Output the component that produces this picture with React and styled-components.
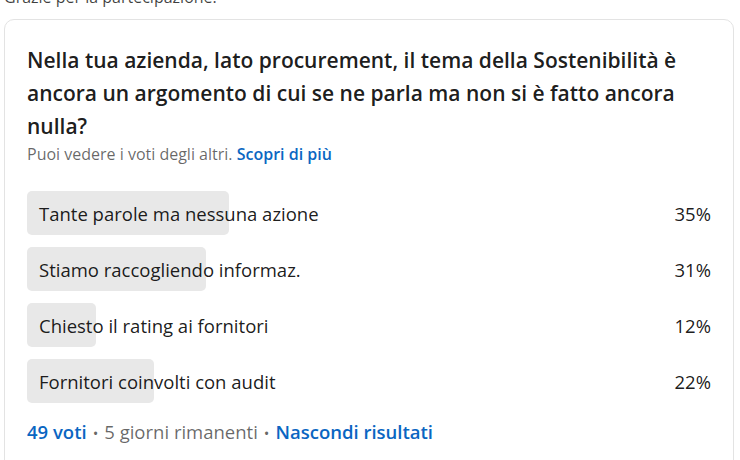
import React from "react";
import styled, { createGlobalStyle } from "styled-components";

const GlobalStyle = createGlobalStyle`
  html, body {
    margin: 0;
    padding: 0;
    background: #ffffff;
    overflow: hidden;
  }

  body {
    font-family: "Open Sans", "Noto Sans", "Liberation Sans", sans-serif;
    color: rgba(0, 0, 0, 0.9);
  }
`;

const options = [
  { label: "Tante parole ma nessuna azione", pct: 35 },
  { label: "Stiamo raccogliendo informaz.", pct: 31 },
  { label: "Chiesto il rating ai fornitori", pct: 12 },
  { label: "Fornitori coinvolti con audit", pct: 22 },
];

const App = () => {
  return (
    <Page>
      <GlobalStyle />
      <Thanks>Grazie per la partecipazione.</Thanks>
      <Card>
        <Question>
          Nella tua azienda, lato procurement, il tema della Sostenibilità è
          ancora un argomento di cui se ne parla ma non si è fatto ancora
          nulla?
        </Question>
        <Hint>
          Puoi vedere i voti degli altri. <HintLink>Scopri di più</HintLink>
        </Hint>
        <Options>
          {options.map((o) => (
            <Option key={o.label}>
              <Track>
                <Fill style={{ width: `${o.pct}%` }} />
                <Label>{o.label}</Label>
              </Track>
              <Percent>{o.pct}%</Percent>
            </Option>
          ))}
        </Options>
        <Footer>
          <FooterLink>49 voti</FooterLink>
          <Dot>•</Dot>
          <span>5 giorni rimanenti</span>
          <Dot>•</Dot>
          <FooterLink>Nascondi risultati</FooterLink>
        </Footer>
      </Card>
    </Page>
  );
};

const Page = styled.div`
  padding: 0 6px 0 4px;
`;

const Thanks = styled.div`
  margin-top: -13px;
  font-size: 16px;
  line-height: 20px;
  color: rgba(0, 0, 0, 0.75);
`;

const Card = styled.div`
  margin-top: 12px;
  border: 1px solid #e3e3e3;
  border-radius: 10px;
  padding: 24px 22px 40px 22px;
  background: #ffffff;
`;

const Question = styled.h2`
  margin: 0;
  font-size: 21px;
  font-weight: 600;
  line-height: 33px;
  color: rgba(0, 0, 0, 0.9);
`;

const Hint = styled.div`
  margin-top: 1px;
  font-size: 16px;
  line-height: 20px;
  color: rgba(0, 0, 0, 0.6);
`;

const HintLink = styled.span`
  color: #0a66c2;
  font-weight: 600;
`;

const Options = styled.div`
  display: flex;
  flex-direction: column;
  gap: 12px;
  margin-top: 27px;
`;

const Option = styled.div`
  display: flex;
  align-items: center;
  height: 44px;
`;

const Track = styled.div`
  position: relative;
  flex: 1;
  height: 100%;
  display: flex;
  align-items: center;
  padding-left: 12px;
`;

const Fill = styled.div`
  position: absolute;
  left: 0;
  top: 0;
  bottom: 0;
  border-radius: 5px;
  background: #e8e8e8;
`;

const Label = styled.span`
  position: relative;
  font-size: 18.5px;
  color: rgba(0, 0, 0, 0.9);
  white-space: nowrap;
`;

const Percent = styled.span`
  width: 106px;
  text-align: right;
  font-size: 18.5px;
  color: rgba(0, 0, 0, 0.9);
`;

const Footer = styled.div`
  margin-top: 17px;
  display: flex;
  align-items: baseline;
  gap: 6px;
  font-size: 18.5px;
  line-height: 24px;
  color: rgba(0, 0, 0, 0.6);
`;

const FooterLink = styled.span`
  color: #0a66c2;
  font-weight: 600;
`;

const Dot = styled.span`
  font-size: 15px;
`;

export default App;
